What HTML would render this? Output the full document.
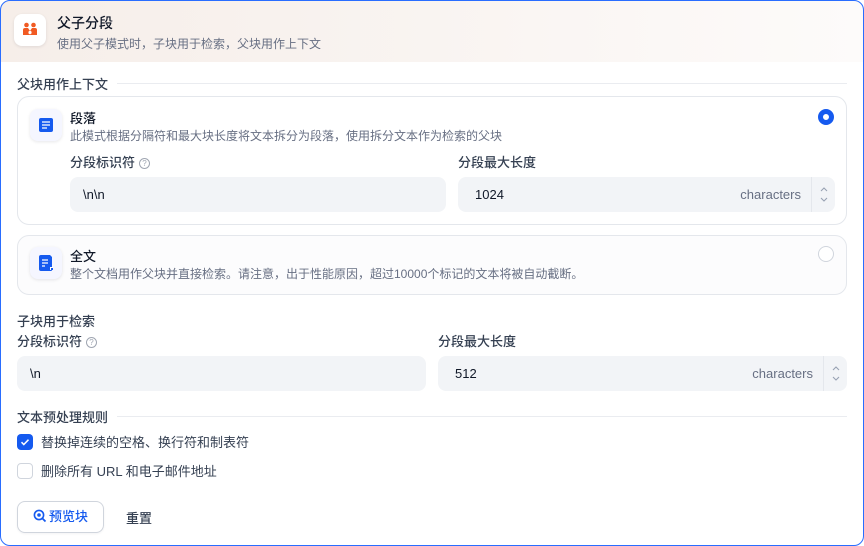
<!DOCTYPE html>
<html><head><meta charset="utf-8"><style>
*{box-sizing:border-box;margin:0;padding:0}
body{width:864px;height:546px;background:#fff;font-family:"Liberation Sans","Noto Sans CJK SC",sans-serif;color:#101828;position:relative;overflow:hidden}
.outer{position:absolute;left:0;top:0;width:864px;height:546px;border:1.5px solid #296dff;border-radius:10px;pointer-events:none}
.hdr{position:absolute;left:0;top:0;width:864px;height:62px;background:linear-gradient(90deg,#f6eee9 0%,#f9f4f1 50%,#fdfbfa 100%);border-radius:10px 10px 0 0}
.ab{position:absolute}
.ib{position:absolute;width:32px;height:32px;border-radius:8px;background:#fff;box-shadow:0 1px 3px rgba(16,24,40,.1)}
.t12{font-size:12px;color:#676f83}
.t13{font-size:13px;font-weight:500;color:#354052}
.line{position:absolute;height:1px;background:#eaecf0}
.card{position:absolute;border:1px solid #e4e7ec;border-radius:12px}
.inp{position:absolute;height:35px;background:#f2f4f7;border-radius:8px;font-size:13px;color:#101828;padding-left:17px;line-height:35px}
.chars{position:absolute;right:34px;top:0;font-size:13px;color:#676f83}
.spin{position:absolute;right:0;top:0;width:24px;height:35px;border-left:1px solid #e4e7ec}
.q{display:inline-block;width:11px;height:11px;border:1px solid #a0a6b2;border-radius:50%;font-size:8px;line-height:9px;text-align:center;color:#a0a6b2;vertical-align:1px;margin-left:4px;font-weight:400}
</style></head><body>
<div class="hdr"></div>
<div class="ib" style="left:14px;top:14px">
<svg width="32" height="32" viewBox="0 0 32 32"><circle cx="12.5" cy="11" r="2.3" fill="#f15a22"/><circle cx="19.5" cy="11" r="2.3" fill="#f15a22"/><path d="M9 21v-5q0-2 2-2h3l2 3 2-3h3q2 0 2 2v5z" fill="#f15a22"/><circle cx="16" cy="18.5" r="1.6" fill="#fff"/><path d="M13.5 22q2.5-2.5 5 0z" fill="#fff"/></svg>
</div>
<div class="ab" style="left:57px;top:13px;font-size:14px;font-weight:500">父子分段</div>
<div class="ab t12" style="left:57px;top:35px">使用父子模式时，子块用于检索，父块用作上下文</div>

<div class="ab t13" style="left:17px;top:74px">父块用作上下文</div>
<div class="line" style="left:117px;top:83px;width:730px"></div>

<div class="card" style="left:17px;top:96px;width:830px;height:129px;background:#fff"></div>
<div class="ib" style="left:30px;top:109px;background:#f5f6ff">
<svg width="32" height="32" viewBox="0 0 32 32"><rect x="9" y="9" width="14" height="14" rx="2" fill="#155aef"/><path d="M12 13h8M12 16h8M12 19h5" stroke="#fff" stroke-width="1.3"/></svg></div>
<div class="ab" style="left:70px;top:108px;font-size:13px;font-weight:500">段落</div>
<div class="ab t12" style="left:70px;top:127px">此模式根据分隔符和最大块长度将文本拆分为段落，使用拆分文本作为检索的父块</div>
<div class="ab" style="left:818px;top:109px;width:16px;height:16px;border-radius:50%;border:5px solid #155aef;background:#fff"></div>
<div class="ab t13" style="left:70px;top:152px">分段标识符<span class="q">?</span></div>
<div class="ab t13" style="left:458px;top:152px">分段最大长度</div>
<div class="inp" style="left:70px;top:177px;width:376px;padding-left:13px">\n\n</div>
<div class="inp" style="left:458px;top:177px;width:377px">1024<span class="chars">characters</span><div class="spin"><svg width="24" height="35"><path d="M9 14l3-3 3 3M9 21l3 3 3-3" stroke="#98a2b2" fill="none" stroke-width="1.1"/></svg></div></div>

<div class="card" style="left:17px;top:235px;width:830px;height:60px;background:#fcfcfd"></div>
<div class="ib" style="left:30px;top:247px;background:#f5f6ff">
<svg width="32" height="32" viewBox="0 0 32 32"><path d="M9 10a2 2 0 0 1 2-2h9l2 2v13a1 1 0 0 1-1 1H11a2 2 0 0 1-2-2z" fill="#155aef"/><path d="M12 13h6M12 16h6M12 19h3" stroke="#fff" stroke-width="1.3"/><rect x="20" y="20" width="3" height="3" fill="#fff"/><rect x="21" y="21" width="2" height="2" fill="#155aef"/></svg></div>
<div class="ab" style="left:70px;top:246px;font-size:13px;font-weight:500">全文</div>
<div class="ab t12" style="left:70px;top:265px">整个文档用作父块并直接检索。请注意，出于性能原因，超过10000个标记的文本将被自动截断。</div>
<div class="ab" style="left:818px;top:246px;width:16px;height:16px;border-radius:50%;border:1px solid #d0d5dd;background:#fff"></div>

<div class="ab t13" style="left:17px;top:311px">子块用于检索</div>
<div class="ab t13" style="left:17px;top:331px">分段标识符<span class="q">?</span></div>
<div class="ab t13" style="left:438px;top:331px">分段最大长度</div>
<div class="inp" style="left:17px;top:356px;width:409px;padding-left:13px">\n</div>
<div class="inp" style="left:438px;top:356px;width:409px">512<span class="chars">characters</span><div class="spin"><svg width="24" height="35"><path d="M9 14l3-3 3 3M9 21l3 3 3-3" stroke="#98a2b2" fill="none" stroke-width="1.1"/></svg></div></div>

<div class="ab t13" style="left:17px;top:407px">文本预处理规则</div>
<div class="line" style="left:117px;top:416px;width:730px"></div>
<div class="ab" style="left:17px;top:434px;width:16px;height:16px;border-radius:4px;background:#155aef"><svg width="16" height="16"><path d="M4.5 8.2l2.3 2.3 4.7-4.8" stroke="#fff" stroke-width="1.5" fill="none"/></svg></div>
<div class="ab" style="left:41px;top:432px;font-size:13px;color:#354052">替换掉连续的空格、换行符和制表符</div>
<div class="ab" style="left:17px;top:463px;width:16px;height:16px;border-radius:4px;border:1px solid #d0d5dd;background:#fff"></div>
<div class="ab" style="left:41px;top:461px;font-size:13px;color:#354052">删除所有 URL 和电子邮件地址</div>

<div class="ab" style="left:17px;top:501px;width:87px;height:32px;border:1px solid #d0d5dd;border-radius:8px;box-shadow:0 1px 2px rgba(16,24,40,.05);font-size:13px;color:#155aef;line-height:30px;padding-left:15px;font-weight:500">
<svg width="14" height="14" viewBox="0 0 14 14" style="vertical-align:-2px;margin-right:2px"><circle cx="6" cy="6" r="4.6" stroke="#155aef" stroke-width="1.6" fill="none"/><circle cx="6" cy="6" r="1.8" fill="#155aef"/><path d="M9.5 9.5l3 3" stroke="#155aef" stroke-width="1.8"/></svg>预览块</div>
<div class="ab" style="left:126px;top:508px;font-size:13px;color:#354052;font-weight:500">重置</div>
<div class="outer"></div>
</body></html>
